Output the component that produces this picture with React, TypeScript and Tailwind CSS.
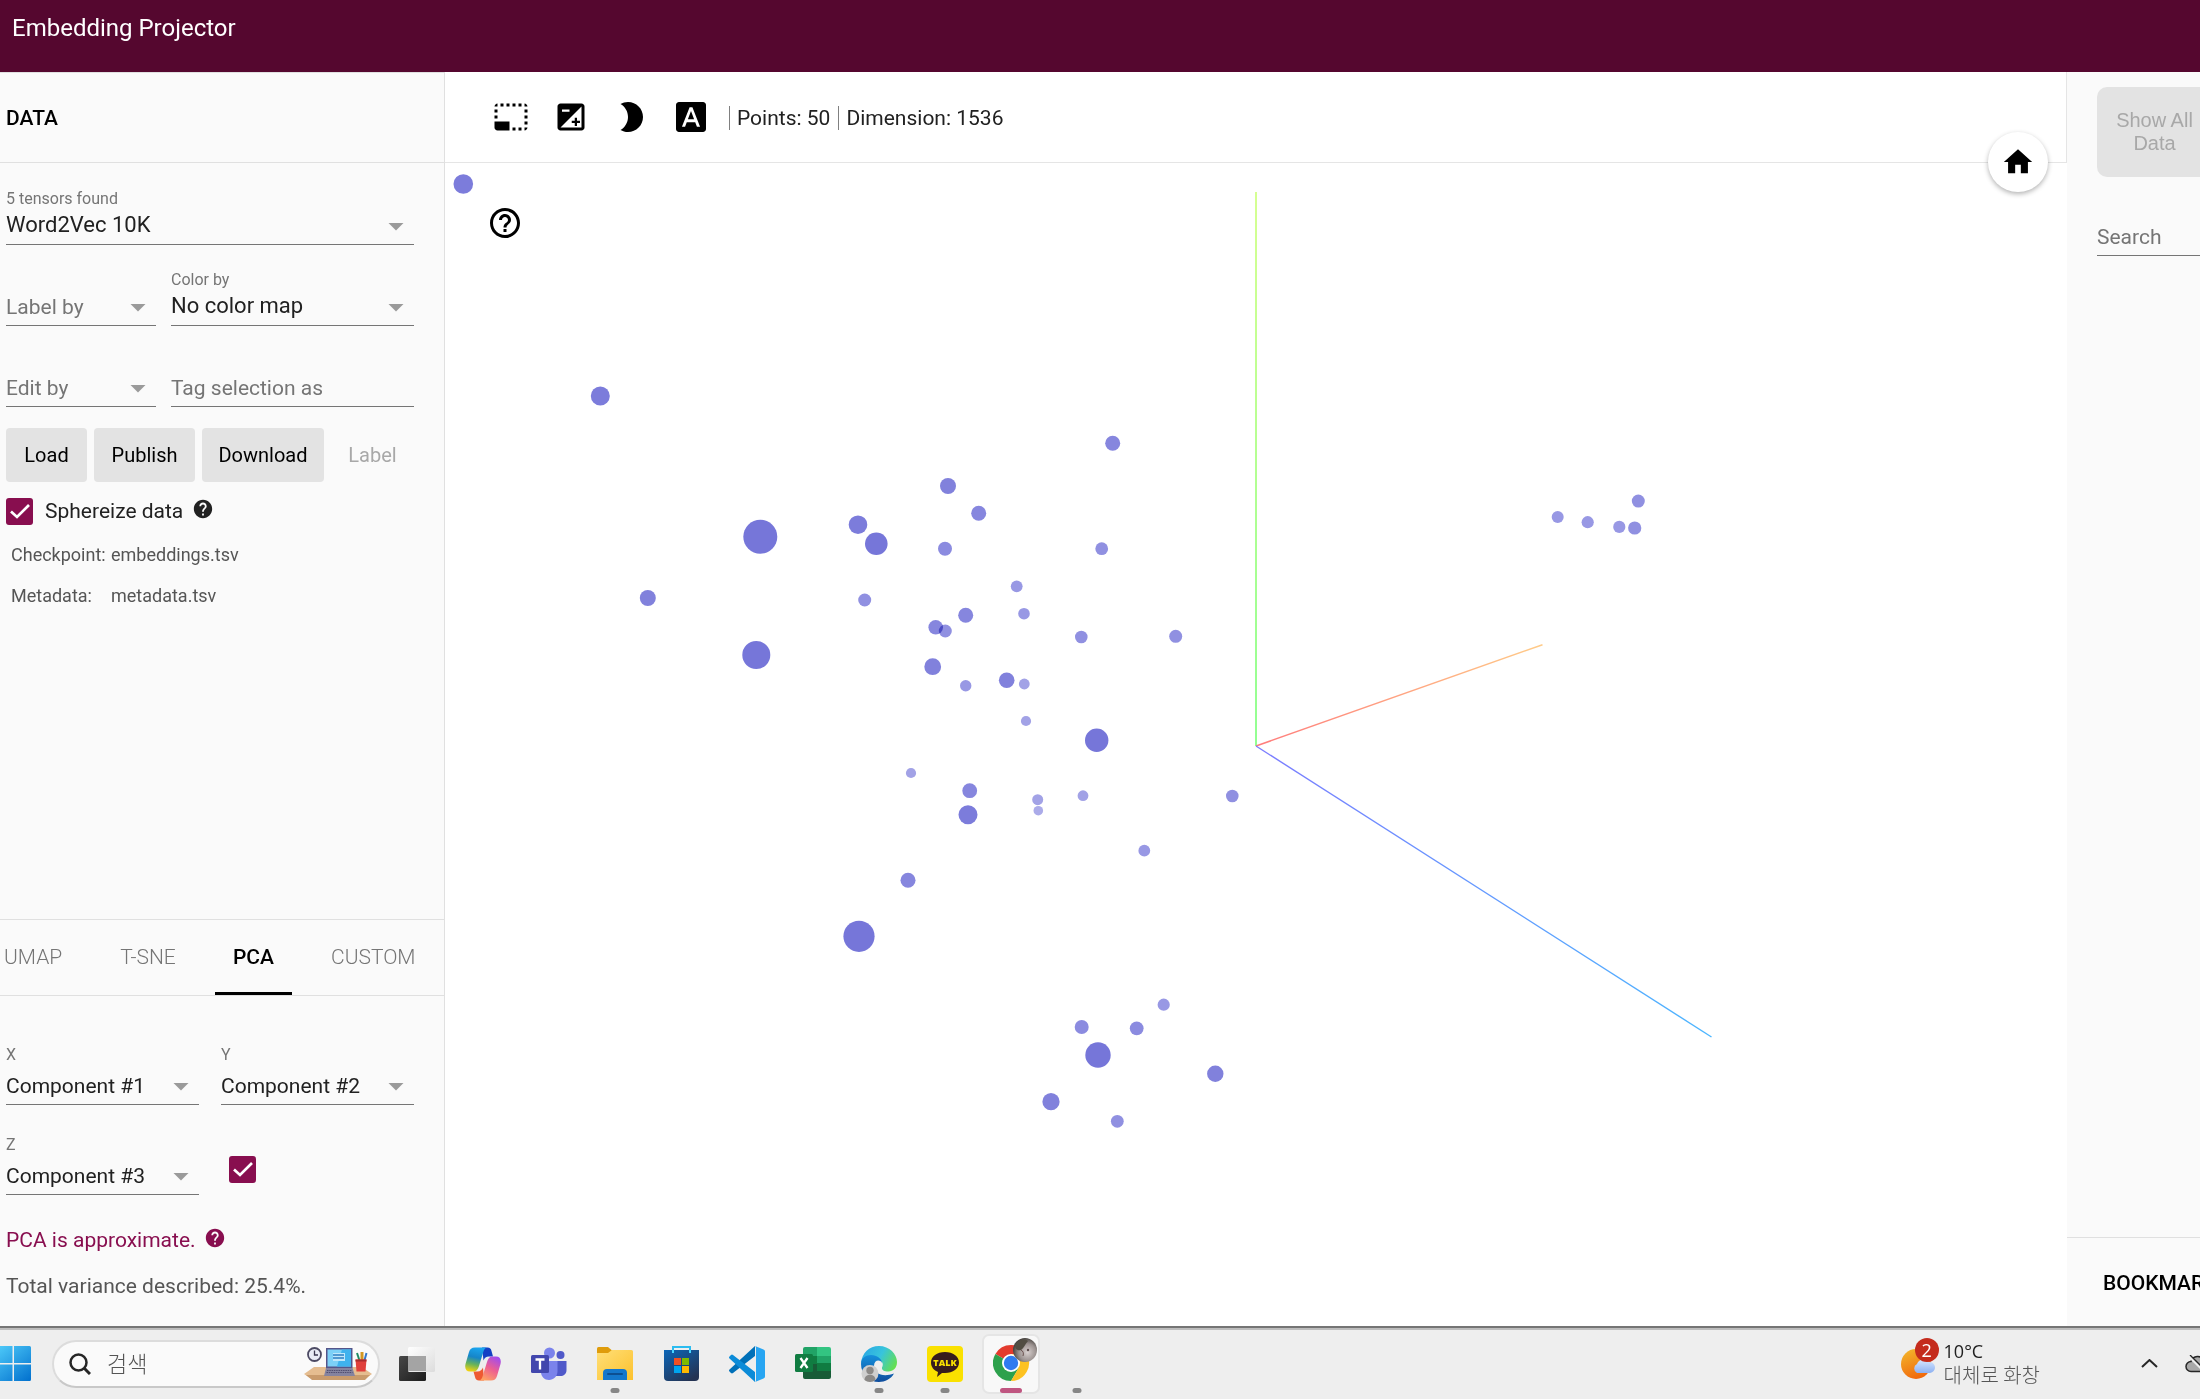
import React from "react";
import {
  MdArrowDropDown,
  MdBrightness2,
  MdExposure,
  MdFontDownload,
  MdHelp,
  MdHelpOutline,
  MdHome,
  MdPhotoSizeSelectSmall,
} from "react-icons/md";

type Point = [x: number, y: number, radius: number];

const points: Point[] = [
  [18.3, 21, 9.8], [155.3, 233, 9.5], [202.8, 435, 8],
  [667.7, 280.3, 7.5], [503, 323, 8], [533.7, 350.3, 7.5], [413, 361.7, 9.3], [431.3, 380.7, 11.3],
  [315.3, 373.7, 17], [500, 385.7, 7], [656.7, 385.7, 6.4], [571.7, 423.3, 5.9], [419.7, 437, 6.5],
  [579, 450.7, 5.8], [520.7, 452.3, 7.5], [490.7, 464.3, 7.3], [500.3, 468, 6.5], [636.3, 474, 6.3],
  [730.7, 473.3, 6.5], [311.3, 492, 14], [487.7, 503.7, 8.4], [520.7, 522.7, 5.7], [561.7, 517.3, 7.8],
  [579.3, 521, 5.4], [581, 558, 5.1], [651.7, 577.3, 11.7], [466, 610, 5.1], [524.7, 627.7, 7.4],
  [523, 651.7, 9.5], [592.7, 636.7, 5.5], [593.3, 647.7, 4.8], [638, 632.7, 5.4], [699.3, 687.7, 5.9],
  [463, 717.3, 7.5], [414, 773.3, 15.6], [787.3, 633, 6.3], [718.7, 841.7, 6.1], [636.7, 864, 7],
  [691.7, 865.3, 6.9], [653, 892, 12.7], [770.3, 910.7, 8.2], [606, 938.7, 8.6], [672.3, 958.3, 6.4],
  [1112.7, 354.1, 6], [1142.7, 359.2, 6.1], [1174.3, 363.9, 6.1], [1189.7, 365, 6.6], [1193.3, 338.1, 6.5],
];

// Points further from the camera are smaller and paler.
function shade(radius: number) {
  if (radius >= 10) return "#7676d9";
  if (radius >= 9) return "#7c7cdb";
  if (radius >= 7.7) return "#8181dc";
  if (radius >= 7.2) return "#8686de";
  if (radius >= 6.7) return "#8b8be0";
  if (radius >= 6.2) return "#9090e1";
  if (radius >= 5.6) return "#9898e4";
  if (radius >= 5) return "#a2a2e6";
  return "#ababe9";
}

function Scatter() {
  return (
    <svg
      className="h-full w-full"
      viewBox="0 0 1622 1163"
      preserveAspectRatio="xMidYMid slice"
      role="img"
      aria-label="Scatter plot of embeddings"
    >
      <defs>
        <linearGradient id="axis-y" gradientUnits="userSpaceOnUse" x1="811" y1="583" x2="811" y2="29">
          <stop offset="0" stopColor="#92ff92" />
          <stop offset="1" stopColor="#d6ff92" />
        </linearGradient>
        <linearGradient id="axis-x" gradientUnits="userSpaceOnUse" x1="811" y1="583" x2="1097" y2="482">
          <stop offset="0" stopColor="#ff7c7c" />
          <stop offset="1" stopColor="#ffcb88" />
        </linearGradient>
        <linearGradient id="axis-z" gradientUnits="userSpaceOnUse" x1="811" y1="583" x2="1266" y2="874">
          <stop offset="0" stopColor="#7c7cff" />
          <stop offset="1" stopColor="#4cb6ff" />
        </linearGradient>
      </defs>
      <path d="M811 583V29" stroke="url(#axis-y)" strokeWidth="2" />
      <path d="M811 583L1097.500 481.700" stroke="url(#axis-x)" strokeWidth="1.500" />
      <path d="M811 583L1266.500 874" stroke="url(#axis-z)" strokeWidth="1.400" />
      {points.map(([x, y, r]) => (
        <circle key={`${x}-${y}`} className="mix-blend-multiply" cx={x} cy={y} r={r} fill={shade(r)} />
      ))}
    </svg>
  );
}

function SelectField({
  id,
  label,
  value,
  floating = false,
  spaced = false,
}: {
  id: string;
  label: string;
  value?: string;
  floating?: boolean;
  spaced?: boolean;
}) {
  return (
    <div className="min-w-0 flex-1">
      <label
        htmlFor={id}
        className={`block text-base text-[#757575] ${floating ? "" : "invisible"} ${spaced ? "pb-[5px] leading-6" : "pb-0.5 leading-[22px]"}`}
      >
        {label}
      </label>
      <div className={`relative border-b border-[#757575] ${value && !spaced ? "pb-1.5" : "pb-1"}`}>
        <select
          id={id}
          defaultValue={value ?? label}
          className={`block w-full appearance-none bg-transparent pr-9 ${spaced ? "h-7 text-[21px] leading-7 text-[#212121]" : value ? "h-[26px] text-[22px] leading-[26px] text-[#212121]" : "h-7 text-[21px] leading-7 text-[#757575]"}`}
        >
          <option>{value ?? label}</option>
        </select>
        <MdArrowDropDown className="pointer-events-none absolute -top-1 right-0 size-9 text-[#9a9a9a]" />
      </div>
    </div>
  );
}

function CheckBox({ id, label }: { id: string; label?: string }) {
  return (
    <span className="relative block size-[27px] shrink-0">
      <input
        id={id}
        type="checkbox"
        defaultChecked
        aria-label={label}
        className="block size-full appearance-none rounded-[3px] bg-[#880e4f]"
      />
      <svg viewBox="0 0 27 27" className="pointer-events-none absolute inset-0" fill="none" aria-hidden="true">
        <path d="M5 13.500l6 5.500L23 7" stroke="#fff" strokeWidth="2.700" />
      </svg>
    </span>
  );
}

function DataPanel() {
  return (
    <aside className="flex w-[445px] shrink-0 flex-col border-r border-t border-[#e0e0e0] bg-[#fafafa]">
      <h2 className="flex h-[90px] items-center border-b border-[#e0e0e0] pl-1.5 pt-0.5 text-[21px] font-medium">DATA</h2>

      <div className="flex flex-1 flex-col pl-1.5 pr-[30px] pt-[25px]">
        <div className="flex">
          <SelectField id="tensor" label="5 tensors found" value="Word2Vec 10K" floating />
        </div>
        <div className="mt-6 flex gap-[15px]">
          <div className="flex w-[150px]">
            <SelectField id="label-by" label="Label by" />
          </div>
          <SelectField id="color-by" label="Color by" value="No color map" floating />
        </div>
        <div className="mt-6 flex items-end gap-[15px]">
          <div className="flex w-[150px]">
            <SelectField id="edit-by" label="Edit by" />
          </div>
          <input
            aria-label="Tag selection as"
            placeholder="Tag selection as"
            className="h-[33px] min-w-0 flex-1 border-b border-[#757575] bg-transparent pb-1 text-[21px] placeholder:text-[#757575]"
          />
        </div>

        <div className="mt-[21px] flex gap-[7px] text-[20px]">
          <button className="h-[54px] w-[81px] rounded-[4px] bg-[#e3e3e3]">Load</button>
          <button className="h-[54px] w-[101px] rounded-[4px] bg-[#e3e3e3]">Publish</button>
          <button className="h-[54px] w-[122px] rounded-[4px] bg-[#e3e3e3]">Download</button>
          <button className="h-[54px] w-[83px] text-[#a8a8a8]" disabled>Label</button>
        </div>

        <div className="mt-[15px] flex items-center">
          <CheckBox id="sphereize" />
          <label htmlFor="sphereize" className="pl-3 text-[21px] leading-7 text-[#212121]">Sphereize data</label>
          <button aria-label="About sphereizing" className="mb-1 ml-[9px]"><MdHelp className="size-[22px] text-[#212121]" /></button>
        </div>

        <dl className="mt-4 grid grid-cols-[100px_1fr] gap-y-[13px] pl-[5px] text-[18px] leading-7 text-[#555]">
          <dt>Checkpoint:</dt>
          <dd>embeddings.tsv</dd>
          <dt>Metadata:</dt>
          <dd>metadata.tsv</dd>
        </dl>
      </div>

      <nav className="flex h-[77px] border-y border-[#e0e0e0] text-[21px] font-light text-[#757575]">
        <button className="w-[81px] pl-1 text-left">UMAP</button>
        <button className="w-[134px]">T-SNE</button>
        <button className="w-[77px] border-b-3 border-t-3 border-b-black border-t-transparent font-medium text-black">PCA</button>
        <button className="flex-1 pl-[39px] text-left">CUSTOM</button>
      </nav>

      <div className="flex flex-col pb-[26px] pl-1.5 pr-[30px] pt-[47px]">
        <div className="flex gap-[22px]">
          <SelectField id="pca-x" label="X" value="Component #1" floating spaced />
          <SelectField id="pca-y" label="Y" value="Component #2" floating spaced />
        </div>
        <div className="mt-7 flex items-center gap-[30px]">
          <div className="flex w-[193px]">
            <SelectField id="pca-z" label="Z" value="Component #3" floating spaced />
          </div>
          <div className="mt-2.5">
            <CheckBox id="use-z" label="Use third component" />
          </div>
        </div>
        <div className="mt-[31px] flex items-center text-[21px] leading-7 text-[#880e4f]">
          PCA is approximate.
          <button aria-label="About PCA" className="mb-1 ml-2"><MdHelp className="size-[22px]" /></button>
        </div>
        <p className="mt-[18px] text-[21px] leading-7 text-[#555]">Total variance described: 25.4%.</p>
      </div>
    </aside>
  );
}

function Projector() {
  return (
    <section className="relative flex min-w-0 flex-1 flex-col bg-white">
      <div className="flex h-[91px] items-center border-b border-r border-[#e5e5e5] pl-12 text-[21px] text-[#212121]">
        <div className="flex gap-6 text-black">
          <button aria-label="Bounding box selection"><MdPhotoSizeSelectSmall className="size-9" /></button>
          <button aria-label="Sphereize background"><MdExposure className="size-9" /></button>
          <button aria-label="Night mode"><MdBrightness2 className="size-9" /></button>
          <button aria-label="3D labels"><MdFontDownload className="size-9" /></button>
        </div>
        <div className="ml-5 mt-0.5 flex leading-6">
          <span className="border-l border-[#808080] pl-[7px] pr-2">Points: 50</span>
          <span className="border-l border-[#808080] pl-[7px]">Dimension: 1536</span>
        </div>
      </div>
      <div className="relative min-h-0 flex-1">
        <div className="absolute inset-0">
          <Scatter />
        </div>
        <button aria-label="Help" className="absolute left-[42px] top-[42px]"><MdHelpOutline className="size-9" /></button>
      </div>
      <button
        aria-label="Reset view"
        className="absolute right-[19px] top-[60px] flex size-[60px] items-center justify-center rounded-full bg-white shadow-[0_2px_5px_rgba(0,0,0,0.3)]"
      >
        <MdHome className="size-[34px]" />
      </button>
    </section>
  );
}

function InspectorPanel() {
  return (
    <aside className="w-[133px] shrink-0 overflow-hidden bg-[#fafafa]">
      <div className="flex h-full w-[450px] flex-col">
        <div className="flex-1 pl-[30px] pt-[15px]">
          <button
            disabled
            className="block h-[90px] w-[115px] rounded-[10px] bg-[#e3e3e3] px-4 font-['Liberation_Sans',sans-serif] text-[20px] leading-[23px] text-[#a8a8a8]"
          >
            Show All Data
          </button>
          <input
            aria-label="Search"
            placeholder="Search"
            className="mt-[43px] block h-9 w-[240px] border-b border-[#757575] bg-transparent pb-0.5 text-[21px] placeholder:text-[#757575]"
          />
        </div>
        <h2 className="flex h-[89px] items-center border-t border-[#e0e0e0] pl-9 pt-1 text-[21px] font-medium">BOOKMARKS (0)</h2>
      </div>
    </aside>
  );
}

function StartIcon() {
  return (
    <svg viewBox="0 0 31 35" className="h-[35px] w-[31px]" aria-hidden="true">
      <defs>
        <linearGradient id="win" gradientUnits="userSpaceOnUse" x1="0" y1="0" x2="28" y2="35">
          <stop offset="0" stopColor="#4cc8f8" />
          <stop offset="1" stopColor="#0473cf" />
        </linearGradient>
      </defs>
      <path fill="url(#win)" d="M0 0h12.500v17H0zM14 0h15.500q1.500 0 1.500 1.500V17H14zM0 18.500h12.500V35H0zM14 18.500h17v15q0 1.500-1.500 1.500H14z" />
    </svg>
  );
}

function DeskIllustration() {
  return (
    <svg viewBox="0 0 68 34" className="h-[34px] w-[68px]" aria-hidden="true">
      <path d="M0 27l10-7h48l10 7-6 4H6z" fill="#e5bd90" />
      <path d="M2 28h64l-5 5H8z" fill="#c99b6c" />
      <circle cx="10.500" cy="7.500" r="6.500" fill="#e9ecf5" stroke="#4c4a63" strokeWidth="1.800" />
      <path d="M10.500 3.500v4.500H14" stroke="#3b3950" strokeWidth="1.300" fill="none" />
      <path d="M22 1h26.500v20H22z" fill="#54558a" />
      <path d="M23.500 2.500h23.500v17H23.500z" fill="#7cd0f7" />
      <path d="M38 2.500h9v17H33z" fill="#3fb2ee" />
      <path d="M29 6h12v8H29z" fill="#bfe7fb" />
      <path d="M29 8h11M29 11h11" stroke="#2c7fc4" strokeWidth="1.300" />
      <path d="M22 21h26.500l2.500 8H20z" fill="#85839f" />
      <path d="M23 23.500h25M22.500 25.500h26" stroke="#504e70" strokeDasharray="1.500 .8" />
      <path d="M53 6l3 9" stroke="#1e8a62" strokeWidth="2" />
      <path d="M58 5v10" stroke="#d39722" strokeWidth="3" />
      <path d="M62.500 6L60 15" stroke="#3478ca" strokeWidth="2" />
      <path d="M51.500 12.500h11l-1 12h-9z" fill="#e0403c" />
      <path d="M51.500 12.500h11v2h-11z" fill="#a92c2e" />
    </svg>
  );
}

function TaskViewIcon() {
  return (
    <svg viewBox="0 0 36 36" className="size-9" aria-hidden="true">
      <defs>
        <linearGradient id="tv-dark" x1="0" y1="0" x2="1" y2="1">
          <stop offset="0" stopColor="#484848" />
          <stop offset="1" stopColor="#1c1c1c" />
        </linearGradient>
        <linearGradient id="tv-light" x1="0" y1="0" x2="1" y2="1">
          <stop offset="0" stopColor="#fff" />
          <stop offset="1" stopColor="#dcdcdc" />
        </linearGradient>
      </defs>
      <rect x="0" y="10" width="27" height="25" rx="1.500" fill="url(#tv-dark)" />
      <rect x="9" y="1" width="27" height="25" rx="1.500" fill="url(#tv-light)" />
      <path d="M9 10h18v15H9z" fill="#a4a4a4" />
    </svg>
  );
}

function CopilotIcon() {
  return (
    <svg viewBox="0 0 36 34" className="h-[34px] w-9" aria-hidden="true">
      <defs>
        <linearGradient id="cp-a" x1="0.500" y1="0" x2="0.300" y2="1">
          <stop offset="0" stopColor="#1aa4ee" />
          <stop offset=".4" stopColor="#1685c8" />
          <stop offset=".7" stopColor="#68b35a" />
          <stop offset="1" stopColor="#f3d20e" />
        </linearGradient>
        <linearGradient id="cp-b" x1="0.800" y1="0" x2="0.300" y2="1">
          <stop offset="0" stopColor="#a04bf0" />
          <stop offset=".5" stopColor="#ec5f92" />
          <stop offset="1" stopColor="#ffa362" />
        </linearGradient>
      </defs>
      <path d="M17 .5h5.500c2.500 0 3.500 1.500 4 3.500l1.500 5.500h-4c-3 0-4.500 1.500-5.500 4z" fill="#1440c4" />
      <path d="M19 33.500h-5c-2.500 0-3.500-1.500-4-3.500l-1.500-5.500h4c3 0 4.500-2 5.500-4z" fill="#ee5a32" />
      <path d="M10 .5h12c-2 .5-3 2-3.700 4.500L14 19c-1 3.500-2.500 5.500-5.500 5.500H5c-4 0-5.500-3-4.500-7.500L4 5C5 2 6.500.5 10 .5z" fill="url(#cp-a)" />
      <path d="M26 33.500H14c2-.5 3-2 3.700-4.500L22 15c1-3.500 2.500-5.500 5.500-5.500H31c4 0 5.500 3 4.500 7.500L32 29c-1 3-2.500 4.500-6 4.500z" fill="url(#cp-b)" />
    </svg>
  );
}

function TeamsIcon() {
  return (
    <svg viewBox="0 0 36 34" className="h-[34px] w-9" aria-hidden="true">
      <circle cx="29.500" cy="8" r="4" fill="#5059c9" />
      <path d="M25 14h10.500v9c0 4-3 6-6 6h-4.500z" fill="#5059c9" />
      <circle cx="18.500" cy="6" r="5.500" fill="#7b83eb" />
      <path d="M10 14h16.500v10c0 5.500-4 9-8.500 9s-8-3.500-8-8z" fill="#7b83eb" />
      <rect x="0" y="8" width="18" height="18" rx="1.500" fill="#4247ad" />
      <path d="M4.500 12.500h9M9 12.500v10" stroke="#fff" strokeWidth="2.300" />
    </svg>
  );
}

function ExplorerIcon() {
  return (
    <svg viewBox="0 0 36 33" className="h-[33px] w-9" aria-hidden="true">
      <defs>
        <linearGradient id="ex" x1="0" y1="0" x2="1" y2="1">
          <stop offset="0" stopColor="#ffdf78" />
          <stop offset="1" stopColor="#fcc12d" />
        </linearGradient>
      </defs>
      <path d="M0 1.500Q0 0 1.500 0H11l4 3.500V7H0z" fill="#df9c0b" />
      <path d="M0 6h11l4-3h19.500Q36 3 36 4.500V33H0z" fill="url(#ex)" />
      <path d="M6 33v-7q0-4 4-4h16q4 0 4 4v7z" fill="#1477cc" />
      <path d="M11 27h14" stroke="#0d4f92" strokeWidth="2" strokeLinecap="round" />
    </svg>
  );
}

function StoreIcon() {
  return (
    <svg viewBox="0 0 35 35" className="size-[35px]" aria-hidden="true">
      <defs>
        <linearGradient id="st" x1="0" y1="0" x2=".7" y2="1">
          <stop offset="0" stopColor="#0c66b8" />
          <stop offset="1" stopColor="#243353" />
        </linearGradient>
      </defs>
      <path d="M9 8V1h17v7" fill="none" stroke="#2bbcf0" strokeWidth="2" />
      <path d="M0 4h35v27q0 4-4 4H4q-4 0-4-4z" fill="url(#st)" />
      <path d="M9 7V4M26 7V4" stroke="#45d5ff" strokeWidth="2" />
      <path d="M10 12h7v7h-7z" fill="#f25022" />
      <path d="M18 12h7v7h-7z" fill="#7fba00" />
      <path d="M10 20h7v7h-7z" fill="#00a4ef" />
      <path d="M18 20h7v7h-7z" fill="#ffb900" />
    </svg>
  );
}

function CodeIcon() {
  return (
    <svg viewBox="0 0 36 36" className="size-9" aria-hidden="true">
      <path d="M26 0v10L4 27q-1 .8-2 0l-1.500-1.500q-1-1 0-2z" fill="#0070b8" />
      <path d="M26 36V26L4 9q-1-.8-2 0L.5 10.500q-1 1 0 2z" fill="#0b8bd8" />
      <path d="M26 0l8.500 3.500Q36 4 36 5.500v25q0 1.500-1.500 2L26 36q1-.5 1-2V2q0-1.500-1-2z" fill="#27a5f2" />
    </svg>
  );
}

function ExcelIcon() {
  return (
    <svg viewBox="0 0 36 34" className="h-[34px] w-9" aria-hidden="true">
      <path d="M8 9V2q0-2 2-2h12v9z" fill="#21a366" />
      <path d="M22 0h12q2 0 2 2v7H22z" fill="#33c481" />
      <path d="M8 9h14v8H8z" fill="#107c41" />
      <path d="M22 9h14v7H22z" fill="#21a366" />
      <path d="M22 16h14v8H22z" fill="#107c41" />
      <path d="M8 17h14v7h14v6q0 2-2 2H10q-2 0-2-2z" fill="#185c37" />
      <rect y="7" width="18" height="18" rx="1.500" fill="#107c41" />
      <path d="M5.500 11l7 10M12.500 11l-7 10" stroke="#fff" strokeWidth="2.300" />
    </svg>
  );
}

function EdgeIcon() {
  return (
    <svg viewBox="0 0 36 36" className="size-9" aria-hidden="true">
      <defs>
        <linearGradient id="ed-a" x1="0" y1="0.300" x2="1" y2="0.700">
          <stop offset="0" stopColor="#2aa8e4" />
          <stop offset=".5" stopColor="#38c4dc" />
          <stop offset="1" stopColor="#66e04c" />
        </linearGradient>
        <linearGradient id="ed-b" x1="0" y1="0" x2="0" y2="1">
          <stop offset="0" stopColor="#1590dc" />
          <stop offset="1" stopColor="#0f4d9d" />
        </linearGradient>
      </defs>
      <path d="M0 17C1 7 8 0 18 0c10.500 0 18 8 18 16 0 6-4 9.500-8.500 9.500-4.500 0-7-1.500-6.500-4 2.500-4-1-8-4.500-8C10 12 4 12 0 17z" fill="url(#ed-a)" />
      <path d="M0 18c0-6 5-9 10-9 6 0 11 4 11 8-2-4-8-3-8 3 0 8 9 11.500 20 7.500C30 33 24 36 18 36 8 36 0 28 0 18z" fill="url(#ed-b)" />
      <circle cx="9" cy="27.500" r="8.500" fill="#cfcfcf" />
      <circle cx="9" cy="24.500" r="3.700" fill="#8b8987" />
      <path d="M3.500 34c0-7 11-7 11 0-3 2.500-8 2.500-11 0z" fill="#8b8987" />
    </svg>
  );
}

function TalkIcon() {
  return (
    <span className="relative flex size-9 items-center justify-center rounded-[4px] bg-[#fae100]">
      <svg viewBox="0 0 36 36" className="absolute inset-0" aria-hidden="true">
        <path d="M18 6c8 0 14 4.500 14 10.500S26 27 18 27l-3 0-5 4 1-5C7 24.500 4 21 4 16.500 4 10.500 10 6 18 6z" fill="#371c1d" />
      </svg>
      <span className="relative mb-0.5 font-['Open_Sans',sans-serif] text-[9px] font-extrabold leading-none text-[#fae100]">TALK</span>
    </span>
  );
}

function ChromeIcon() {
  return (
    <svg viewBox="0 0 44 44" className="size-11 shrink-0" aria-hidden="true">
      <defs>
        <radialGradient id="avatar" cx=".6" cy=".6" r=".6">
          <stop offset="0" stopColor="#d8d0cf" />
          <stop offset=".6" stopColor="#9b9290" />
          <stop offset="1" stopColor="#484440" />
        </radialGradient>
      </defs>
      <path d="M18 25L2.400 16a18 18 0 0 1 31.200 0z" fill="#e33b2e" />
      <path d="M18 25L2.400 16A18 18 0 0 0 18 43l8-13.500z" fill="#2da14c" />
      <path d="M18 25V16h15.600A18 18 0 0 1 18 43l7.800-13.500z" fill="#fdc221" />
      <circle cx="18" cy="25" r="9" fill="#fff" />
      <circle cx="18" cy="25" r="7.200" fill="#2f7bf0" />
      <circle cx="32" cy="12" r="12" fill="url(#avatar)" />
      <path d="M22 8c3-6 9-8 13-5-3 3-4 7-7 9-3 1-5 0-6-4z" fill="#514d42" />
      <path d="M28 12c2 1 3 3 2 6" stroke="#69504e" fill="none" />
      <circle cx="35" cy="12" r="1.200" fill="#5d4d4d" />
    </svg>
  );
}

function WeatherIcon() {
  return (
    <span className="relative mb-2 block h-[42px] w-[38px]">
      <svg viewBox="0 0 38 42" className="h-full w-full" aria-hidden="true">
        <defs>
          <linearGradient id="sun" x1=".2" y1="0" x2=".6" y2="1">
            <stop offset="0" stopColor="#f3b52b" />
            <stop offset="1" stopColor="#f0660b" />
          </linearGradient>
          <linearGradient id="cloud" x1="0" y1="0" x2="0" y2="1">
            <stop offset="0" stopColor="#d8e8ff" />
            <stop offset="1" stopColor="#8db1f2" />
          </linearGradient>
        </defs>
        <circle cx="15" cy="26" r="15" fill="url(#sun)" />
        <path d="M16 35a5 5 0 0 1 0-9 7 7 0 0 1 12-2 5.500 5.500 0 0 1 1 11z" fill="url(#cloud)" />
      </svg>
      <span className="absolute right-0 top-0 flex size-6 items-center justify-center rounded-full bg-[#c42b1c] font-['Open_Sans',sans-serif] text-[18px] leading-none text-white">2</span>
    </span>
  );
}

function TaskButton({
  label,
  state = "idle",
  children,
}: {
  label: string;
  state?: "idle" | "running" | "active";
  children?: React.ReactNode;
}) {
  return (
    <button aria-label={label} className="relative flex h-full w-[66px] shrink-0 items-center justify-center">
      {children}
      {state !== "idle" && (
        <span
          className={`absolute bottom-1 left-1/2 h-[5px] -translate-x-1/2 rounded-full ${state === "active" ? "w-[22px] bg-[#bf5580]" : "w-[9px] bg-[#868686]"}`}
        />
      )}
    </button>
  );
}

function Taskbar() {
  return (
    <footer className="flex h-[73px] shrink-0 items-center overflow-hidden border-t-2 border-[#757575] bg-[#eee] font-['Open_Sans','Noto_Sans_CJK_KR',sans-serif]">
      <div className="flex h-full w-full items-center border-t-2 border-[#bdbdbd] pb-0.5">
        <button aria-label="Start" className="w-[52px] shrink-0"><StartIcon /></button>
        <label className="flex h-12 w-[328px] shrink-0 items-center rounded-full border-2 border-[#dcdcdc] border-b-[#c8c8c8] bg-[#fafafa] pl-[15px] pr-1.5">
          <svg viewBox="0 0 22 22" className="size-[22px] shrink-0" fill="none" stroke="#262626" strokeWidth="2.500" aria-hidden="true">
            <circle cx="9.500" cy="9.500" r="8" />
            <path d="M15 15l6 6" strokeWidth="3" />
          </svg>
          <input
            aria-label="검색"
            placeholder="검색"
            className="ml-4 min-w-0 flex-1 bg-transparent pb-0.5 font-['Noto_Sans_CJK_KR',sans-serif] text-[22px] font-light placeholder:text-[#555]"
          />
          <DeskIllustration />
        </label>
        <div className="ml-1 flex h-full">
          <TaskButton label="Task view"><TaskViewIcon /></TaskButton>
          <TaskButton label="Copilot"><CopilotIcon /></TaskButton>
          <TaskButton label="Teams"><TeamsIcon /></TaskButton>
          <TaskButton label="File Explorer" state="running"><ExplorerIcon /></TaskButton>
          <TaskButton label="Microsoft Store"><StoreIcon /></TaskButton>
          <TaskButton label="Visual Studio Code"><CodeIcon /></TaskButton>
          <TaskButton label="Excel"><ExcelIcon /></TaskButton>
          <TaskButton label="Edge" state="running"><EdgeIcon /></TaskButton>
          <TaskButton label="KakaoTalk" state="running"><TalkIcon /></TaskButton>
          <TaskButton label="Chrome" state="active">
            <span className="flex h-[60px] w-[58px] items-center justify-center rounded-[7px] border-2 border-[#e5e5e5] bg-[#f8f8f8] pb-2 pl-2">
              <ChromeIcon />
            </span>
          </TaskButton>
          <TaskButton label="Background app" state="running" />
        </div>
        <button className="ml-auto flex items-center gap-[5px] pb-0.5 text-left">
          <WeatherIcon />
          <span className="flex flex-col gap-0.5">
            <span className="text-[18px] leading-[22px] text-[#212121]">10°C</span>
            <span className="font-['Noto_Sans_CJK_KR',sans-serif] text-[20px] font-light leading-[22px] text-[#555]">대체로 화창</span>
          </span>
        </button>
        <button aria-label="Show hidden icons" className="ml-[101px]">
          <svg viewBox="0 0 17 9" className="h-[9px] w-[17px]" fill="none" stroke="#262626" strokeWidth="2" aria-hidden="true">
            <path d="M1 8l7.500-7L16 8" />
          </svg>
        </button>
        <button aria-label="OneDrive" className="ml-[27px] w-[15px] shrink-0 overflow-hidden">
          <svg viewBox="0 0 26 18" className="h-[18px] w-[26px] max-w-none" aria-hidden="true">
            <path d="M6 16.500a5 5 0 0 1 0-10 7 7 0 0 1 13-1 5.500 5.500 0 0 1 1 11z" fill="#a8a8a8" stroke="#262626" strokeWidth="1.500" />
            <path d="M4 1l16 16" stroke="#eee" strokeWidth="3" />
            <path d="M5 0l17 17" stroke="#262626" strokeWidth="1.300" />
          </svg>
        </button>
      </div>
    </footer>
  );
}

export default function App() {
  return (
    <div className="flex min-h-screen flex-col bg-white font-[Roboto,sans-serif] text-black">
      <header className="h-[72px] shrink-0 bg-[#55072f] pl-3 pt-3">
        <h1 className="text-[24px] leading-8 text-white">Embedding Projector</h1>
      </header>
      <main className="flex flex-1">
        <DataPanel />
        <Projector />
        <InspectorPanel />
      </main>
      <Taskbar />
    </div>
  );
}
